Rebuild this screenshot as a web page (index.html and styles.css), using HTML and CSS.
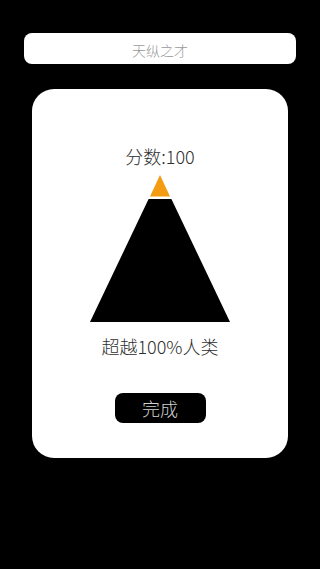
FILE: index.html
```html
<!DOCTYPE html>
<html lang="zh">
<head>
<meta charset="utf-8">
<link rel="stylesheet" href="styles.css">
</head>
<body>
<div class="title-bar">天纵之才</div>
<div class="card">
  <div class="score">分数:100</div>
  <svg class="pyramid" width="140" height="147" viewBox="0 0 140 147">
    <polygon points="70,0 80,21.5 60,21.5" fill="#f39c12"/>
    <polygon points="58.6,24 81.4,24 140,147 0,147" fill="#000"/>
  </svg>
  <div class="beat">超越100%人类</div>
  <div class="done">完成</div>
</div>
</body>
</html>
```
FILE: styles.css
```css
html, body {
  margin: 0;
  padding: 0;
  background: #000;
  width: 320px;
  height: 569px;
  overflow: hidden;
  font-family: "Noto Sans CJK SC", "Noto Sans", sans-serif;
}
.title-bar {
  margin: 33px 24px 0;
  height: 31px;
  padding-top: 2px;
  box-sizing: border-box;
  background: #fff;
  border-radius: 8px;
  color: #999;
  font-size: 14px;
  font-weight: 300;
  display: flex;
  align-items: center;
  justify-content: center;
}
.card {
  margin: 25px 32px 0;
  height: 369px;
  background: #fff;
  border-radius: 22px;
  display: flex;
  flex-direction: column;
  align-items: center;
  padding-top: 55px;
  box-sizing: border-box;
}
.score {
  font-size: 18px;
  line-height: 24px;
  color: #2e2e2e;
  font-weight: 300;
}
.pyramid {
  display: block;
  margin-top: 7px;
}
.beat {
  margin-top: 12px;
  font-size: 18px;
  line-height: 24px;
  color: #2e2e2e;
  font-weight: 300;
}
.done {
  margin-top: 35px;
  width: 91px;
  height: 30px;
  background: #000;
  border-radius: 8px;
  color: #d0d0d0;
  font-size: 18px;
  font-weight: 300;
  display: flex;
  align-items: center;
  justify-content: center;
}
```
